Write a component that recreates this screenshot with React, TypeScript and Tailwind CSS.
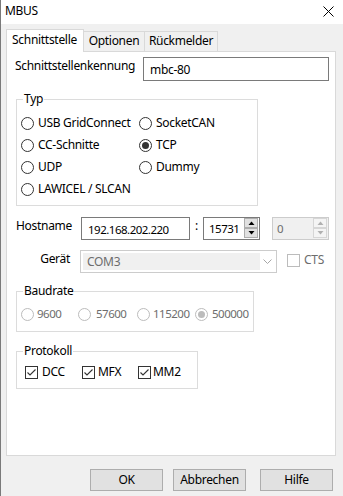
import React from "react";

const NUM = "text-[11.5px] tracking-[-0.5px]";

function Radio({ checked, disabled }: { checked?: boolean; disabled?: boolean }) {
  return (
    <span
      className={
        disabled
          ? "w-[13px] h-[13px] shrink-0 rounded-full border border-[#bcbcbc] bg-white flex items-center justify-center"
          : "w-[13px] h-[13px] shrink-0 rounded-full border border-[#333333] bg-white flex items-center justify-center"
      }
    >
      {checked ? (
        <span className={disabled ? "w-[7px] h-[7px] rounded-full bg-[#bcbcbc]" : "w-[7px] h-[7px] rounded-full bg-[#333333]"} />
      ) : null}
    </span>
  );
}

function Check({ checked, disabled }: { checked?: boolean; disabled?: boolean }) {
  return (
    <span
      className={
        disabled
          ? "w-[13px] h-[13px] shrink-0 border border-[#bcbcbc] bg-white flex items-center justify-center"
          : "w-[13px] h-[13px] shrink-0 border border-[#333333] bg-white flex items-center justify-center"
      }
    >
      {checked ? (
        <svg width="11" height="11" viewBox="0 0 11 11">
          <path d="M1.5 5.5 L4 8 L9.5 2.5" fill="none" stroke="#333333" strokeWidth="1.1" />
        </svg>
      ) : null}
    </span>
  );
}

function Spin({ disabled }: { disabled?: boolean }) {
  const c = disabled ? "#b0b0b0" : "#000000";
  const btn = disabled
    ? "h-[10px] w-[14px] bg-[#f4f4f4] border border-[#d6d6d6] flex items-center justify-center"
    : "h-[10px] w-[14px] bg-[#e1e1e1] border border-[#adadad] flex items-center justify-center";
  return (
    <div className="flex flex-col gap-0 pt-0 pr-[1px]">
      <div className={btn}>
        <svg width="7" height="4" viewBox="0 0 7 4">
          <path d="M0.5 4 L3.5 0.5 L6.5 4Z" fill={c} />
        </svg>
      </div>
      <div className={btn}>
        <svg width="7" height="4" viewBox="0 0 7 4">
          <path d="M0.5 0 L3.5 3.5 L6.5 0Z" fill={c} />
        </svg>
      </div>
    </div>
  );
}

function Group({ label, className, children }: { label: string; className: string; children: React.ReactNode }) {
  return (
    <div className={className}>
      <span className="absolute left-[6px] top-[-9px] px-[1px] bg-white leading-[16px] text-black">{label}</span>
      {children}
    </div>
  );
}

export default function App() {
  return (
    <div className="w-[343px] h-[496px] bg-[#f0f0f0] border-l border-[#7a7a7a] font-['Noto_Sans',sans-serif] text-[12px] tracking-[-0.3px] text-black flex flex-col overflow-hidden">
      {/* title bar */}
      <div className="h-[24px] bg-white flex items-center justify-between pl-[4px] pr-[9px] pb-[2px] shrink-0">
        <span className="leading-[16px]">MBUS</span>
        <svg width="11" height="11" viewBox="0 0 11 11">
          <path d="M0.5 0.5 L10.5 10.5 M10.5 0.5 L0.5 10.5" stroke="#000" strokeWidth="1" />
        </svg>
      </div>

      <div className="pl-[5px] pt-[5px]">
        {/* tabs */}
        <div className="flex items-end h-[22px]">
          <div className="relative z-10 h-[23px] -mb-px w-[78px] bg-white border-l border-t border-r border-[#d9d9d9] flex items-start justify-center pt-[2px] pr-[1px]">
            <span className="leading-[16px]">Schnittstelle</span>
          </div>
          <div className="h-[20px] w-[61px] bg-[#f0f0f0] border-t border-r border-[#d9d9d9] flex items-start justify-center pt-[1px]">
            <span className="leading-[16px]">Optionen</span>
          </div>
          <div className="h-[20px] w-[73px] bg-[#f0f0f0] border-t border-r border-[#d9d9d9] flex items-start justify-center pt-[1px]">
            <span className="leading-[16px]">Rückmelder</span>
          </div>
        </div>

        {/* panel */}
        <div className="w-[330px] h-[405px] bg-white border border-[#d9d9d9] pl-[8px] pt-[5px] flex flex-col">
          {/* Schnittstellenkennung */}
          <div className="flex items-start h-[24px]">
            <span className="w-[128px] leading-[16px] pt-[1px]">Schnittstellenkennung</span>
            <div className="w-[186px] h-[24px] border border-[#7a7a7a] flex items-center pl-[6px] pt-[2px]">
              <span className="leading-[16px]">mbc-80</span>
            </div>
          </div>

          {/* Typ */}
          <Group label="Typ" className="relative mt-[18px] ml-[1px] w-[242px] h-[107px] border border-[#dcdcdc] pl-[4px] pt-[12px]">
            <div className="grid grid-cols-[118px_1fr]">
              {[
                ["USB GridConnect", false, "SocketCAN", false],
                ["CC-Schnitte", false, "TCP", true],
                ["UDP", false, "Dummy", false],
                ["LAWICEL / SLCAN", false, null, false],
              ].map((r, i) => (
                <React.Fragment key={i}>
                  <div className="h-[22px] flex items-center gap-[4px]">
                    <Radio checked={r[1] as boolean} />
                    <span className="leading-[16px] whitespace-nowrap">{r[0] as string}</span>
                  </div>
                  <div className="h-[22px] flex items-center gap-[4px]">
                    {r[2] ? (
                      <>
                        <Radio checked={r[3] as boolean} />
                        <span className="leading-[16px] whitespace-nowrap">{r[2] as string}</span>
                      </>
                    ) : null}
                  </div>
                </React.Fragment>
              ))}
            </div>
          </Group>

          {/* Hostname */}
          <div className="mt-[11px] ml-[1px] flex items-start h-[23px]">
            <span className="w-[65px] leading-[16px] pt-[1px]">Hostname</span>
            <div className="w-[109px] h-[23px] border border-[#7a7a7a] flex items-center pl-[6px] pt-[2px]">
              <span className={`leading-[16px] ${NUM}`}>192.168.202.220</span>
            </div>
            <span className="w-[13px] text-center leading-[16px] pt-[1px]">:</span>
            <div className="w-[57px] h-[23px] border border-[#7a7a7a] flex items-start justify-between pl-[5px] pt-0">
              <span className={`leading-[16px] pt-[3px] ${NUM}`}>15731</span>
              <Spin />
            </div>
            <div className="ml-[12px] w-[57px] h-[23px] border border-[#cccccc] bg-[#f0f0f0] flex items-start justify-between pl-[4px]">
              <span className={`leading-[16px] pt-[3px] text-[#6d6d6d] ${NUM}`}>0</span>
              <Spin disabled />
            </div>
          </div>

          {/* Gerät */}
          <div className="mt-[10px] ml-[1px] flex items-start h-[23px]">
            <span className="w-[64px] leading-[16px] text-right pr-[10px] pt-[1px]">Gerät</span>
            <div className="w-[197px] h-[23px] border border-[#cccccc] bg-white p-[2px] flex items-stretch">
              <div className="flex-1 bg-[#f0f0f0] flex items-center pl-[4px] pt-[1px]">
                <span className="leading-[16px] text-[#6d6d6d]">COM3</span>
              </div>
              <div className="w-[14px] flex items-center justify-center">
                <svg width="9" height="5" viewBox="0 0 9 5">
                  <path d="M0.5 0.5 L4.5 4.5 L8.5 0.5" fill="none" stroke="#a6a6a6" strokeWidth="1" />
                </svg>
              </div>
            </div>
            <div className="ml-[10px] mt-[2px] flex items-center gap-[4px]">
              <Check disabled />
              <span className="leading-[16px] text-[#6d6d6d]">CTS</span>
            </div>
          </div>

          {/* Baudrate */}
          <Group label="Baudrate" className="relative mt-[18px] ml-[1px] w-[238px] h-[41px] border border-[#dcdcdc] pl-[4px] pt-[11px]">
            <div className="flex items-center h-[22px] text-[#6d6d6d]">
              <div className="w-[57px] flex items-center gap-[3px]">
                <Radio disabled />
                <span className={`leading-[16px] ${NUM}`}>9600</span>
              </div>
              <div className="w-[59px] flex items-center gap-[5px]">
                <Radio disabled />
                <span className={`leading-[16px] ${NUM}`}>57600</span>
              </div>
              <div className="w-[58px] flex items-center gap-[3px]">
                <Radio disabled />
                <span className={`leading-[16px] ${NUM}`}>115200</span>
              </div>
              <div className="flex items-center gap-[4px]">
                <Radio disabled checked />
                <span className={`leading-[16px] ${NUM}`}>500000</span>
              </div>
            </div>
          </Group>

          {/* Protokoll */}
          <Group label="Protokoll" className="relative mt-[19px] ml-[1px] w-[182px] h-[38px] border border-[#dcdcdc] pl-[8px] pt-[9px]">
            <div className="flex items-center h-[22px]">
              <div className="w-[57px] flex items-center gap-[4px]">
                <Check checked />
                <span className="leading-[16px]">DCC</span>
              </div>
              <div className="w-[56px] flex items-center gap-[3px]">
                <Check checked />
                <span className="leading-[16px]">MFX</span>
              </div>
              <div className="flex items-center gap-[2px]">
                <Check checked />
                <span className="leading-[16px]">MM2</span>
              </div>
            </div>
          </Group>
        </div>

        {/* buttons */}
        <div className="mt-[13px] flex items-center pl-[84px]">
          <button className="w-[73px] h-[22px] bg-[#e1e1e1] border border-[#adadad] flex items-center justify-center">
            <span className="leading-[16px]">OK</span>
          </button>
          <button className="ml-[10px] w-[73px] h-[22px] bg-[#e1e1e1] border border-[#adadad] flex items-center justify-center">
            <span className="leading-[16px]">Abbrechen</span>
          </button>
          <button className="ml-[14px] w-[73px] h-[22px] bg-[#e1e1e1] border border-[#adadad] flex items-center justify-center">
            <span className="leading-[16px]">Hilfe</span>
          </button>
        </div>
      </div>
    </div>
  );
}
